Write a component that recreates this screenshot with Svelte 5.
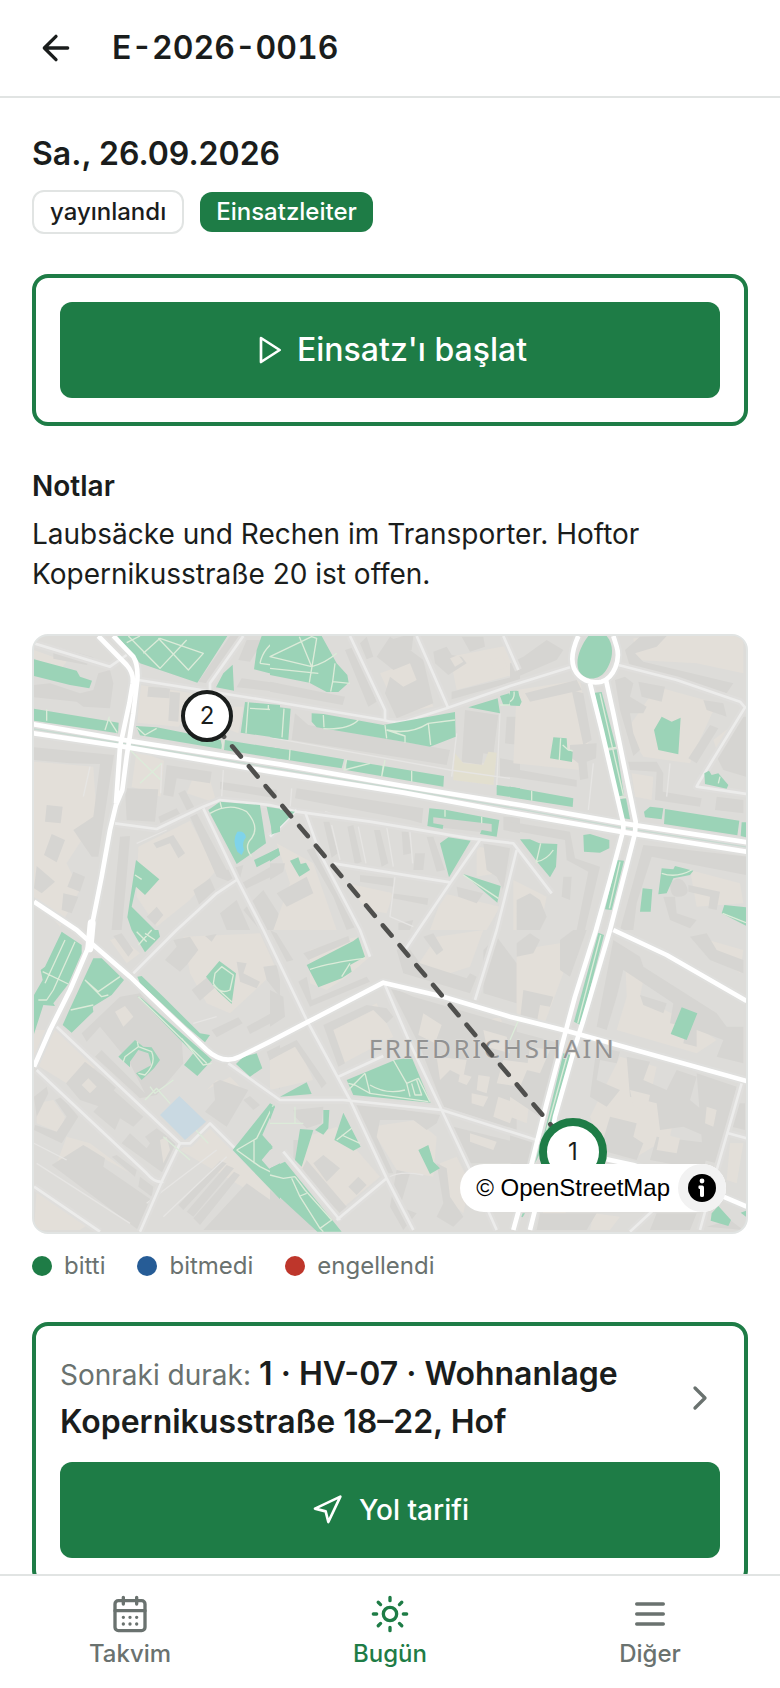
<script lang="ts">
  type MapTile = { x: number; y: number; yards: string; buildings: string; parks: string; paths: string };

  const stops = [
    { number: 2, left: 24.3, top: 13.4, active: false },
    { number: 1, left: 75.7, top: 86.5, active: true },
  ];

  const legend = [
    { label: 'bitti', tone: 'done' },
    { label: 'bitmedi', tone: 'open' },
    { label: 'engellendi', tone: 'blocked' },
  ];

  const tabs = [
    { label: 'Takvim', icon: 'calendar', active: false },
    { label: 'Bugün', icon: 'sun', active: true },
    { label: 'Diğer', icon: 'menu', active: false },
  ];

  const tiles: MapTile[] = [
    {
      x: 0,
      y: 0,
      yards: 'M330 165L520 195 445 290 322 278z M12 395L190 410 200 560 110 700 150 780 90 890 12 800z M320 360L402 392 392 500 305 470z M325 650L480 572 560 720 480 810 380 890 320 800z M470 490L560 520 540 450 490 440z M12 60L110 95 90 120 12 85z M610 230L640 230 625 310 600 300z',
      buildings: 'M12 165L60 160 150 190 190 180 205 130 240 120 250 160 240 235 160 230 140 215 12 202z M70 48L190 82 170 105 70 86z M355 170L420 175 418 205 352 200z M420 185L450 188 445 275 415 272z M12 352L252 375 240 450 205 680 185 680 152 632 130 600 190 560 210 402 120 400 12 390z M50 525L98 530 92 580 45 575z M65 612L105 630 80 697 42 675z M20 708L75 755 35 790 12 775z M130 725L165 740 150 785 112 770z M100 790L145 800 125 850 95 840z M285 475L385 478 375 575 290 570z M410 405L545 425 540 460 440 445 430 500 400 495z M570 455L740 480 740 505 570 478z M445 490L465 480 500 545 480 560z M480 560L500 550 590 720 640 705 625 765 560 740z M270 620L300 618 290 740 275 900 245 900 255 780z M370 640L430 615 465 670 445 685 420 640 380 655z M490 780L540 745 560 790 510 830z M350 860L380 830 400 855 375 885z M600 18L635 18 530 160 505 155z M635 145L745 160 745 185 620 172z M570 850L620 810 660 900 590 900z M640 840L700 780 745 850 745 900 690 900z M650 30L700 30 660 95 625 90z M385 560L440 535 455 560 395 590z M625 765L740 700 745 730 640 780z',
      parks: 'M12 88L140 122 150 140 186 152 178 175 120 165 12 138z M12 236L266 278 264 310 12 272z M262 18H592L502 158 330 100z M608 104L612 182 558 172 580 130z M318 288L380 292 572 330 578 358 330 316z M585 330L750 356V386L582 360z M645 216L750 225V325L632 308z M535 540L570 515 690 525 708 640 620 702z M710 530L750 536V605L728 612z M672 690L745 655 750 675 680 712z M318 690L388 748 345 795 318 770 305 830 375 900H305L292 862z M695 18H750V138L672 118 680 60z',
      paths: 'M295 18L390 115 470 30 M290 38L330 18 M340 70L390 25 520 70 475 120 385 25 M50 238V272 M238 260L225 300 M235 265L262 308 M320 292L345 315 380 295 M580 330L576 358 M655 216L648 310 M660 235L750 240 M715 225V240 M540 550Q600 515 650 545 Q690 590 665 625 Q640 650 665 680 M570 515L575 535 M690 100L750 108 M690 100Q700 50 750 25 M315 735L335 748 M300 360L392 450 M395 400L330 460',
    },
    {
      x: 720,
      y: 0,
      yards: 'M330 130L440 90 490 230 385 250z M540 80L720 45 745 130 560 180z M550 370L580 400 650 400 655 370 680 370 670 465 550 450z M620 650L700 660 680 730 620 740z M230 760L370 790 350 850 290 840z M520 790L690 830 650 900H480z M20 640L130 700 200 900H10L60 760z',
      buildings: 'M320 80L360 20 420 60 460 90 490 220 380 265 345 190 360 140 400 170 440 150 420 100 370 120z M360 30L400 18H430L425 60 385 68z M490 65L530 50 545 75 575 80 590 100 535 135 495 100z M545 185L750 135V150L545 208z M575 20H640L645 50 600 65z M225 60L255 50 320 215 295 230z M0 155L225 200 218 225 0 185z M75 250L115 285 540 360 530 405 65 330z M585 240L685 255 670 375 640 370 635 405 575 395z M80 475L460 535 455 580 420 570 75 505z M490 560L680 580 665 610 490 590z M160 575L178 575 203 670 185 683z M232 590L250 585 275 695 255 705z M312 600L330 600 355 700 335 710z M395 605L415 605 425 670 400 675z M470 620L490 620 525 720 500 725z M435 670L465 670 460 720 430 720z M270 735L370 745 372 770 270 755z M365 790L475 805 472 825 368 805z M20 790L110 740 130 790 50 830z M0 700L45 700 40 725 0 750z M640 640L720 655 700 780 680 740 650 720z M560 770L640 790 620 820 565 800z M710 260H750V345L705 340z M690 385L750 395V440H690z M110 660L140 650 260 890 230 900 190 800z M270 40L290 20 310 80 290 88z M385 880L430 870 420 900H385z M700 560H750V610L700 600z',
      parks: 'M0 18H155L200 100 232 135 236 158 205 186 170 186 118 158 0 135z M125 250L160 252 340 285 555 246 557 320 480 350 400 335 140 292 125 275z M0 228L62 236 55 330 0 322z M0 352L60 360 222 388 215 415 0 382z M230 390L522 438 520 470 228 420z M595 232L683 205 690 250z M690 198L745 182 750 228 700 225z M680 465L750 475V505L680 495z M478 535L530 540 688 570 680 620 630 612 635 600 665 605 665 582 490 562 490 580 520 585 518 597 472 588z M510 640L535 622 602 632 537 742z M580 732L692 768 682 818z M0 535L75 545 5 615z M0 668L25 655 30 675 0 695z M60 692L85 682 92 702 108 698 120 720 88 740z',
      paths: 'M88 20L125 110 0 80 125 20 140 25 118 158 M125 110Q165 100 200 70 M0 115L145 130 M195 100L188 155 240 160 M188 155L182 185 M160 255L162 292 M265 270Q235 300 160 296 M345 285L350 325 M350 300L405 318V338 M350 300Q420 315 475 280L555 270 M475 280L482 345 M60 358L58 390 M230 388L222 420 300 400 M340 405L335 440 M425 422V455 M42 236L36 322 M525 540V560 M635 560V580 M580 735L685 805 M690 225L720 225Q725 200 720 188 M345 390L335 440',
    },
    {
      x: 1440,
      y: 0,
      yards: 'M370 25L470 18H700V130L560 100 380 90z M20 180L210 150 240 320 210 420 10 400z M440 170L620 220 560 350 540 400 400 380 350 300z M610 330L700 260V420L640 420z M10 750L110 800 90 900H10z M540 720L690 760 700 820 560 830z M365 430L430 440 425 510 375 500z',
      buildings: 'M0 100L40 80 110 30 160 60 140 90 0 150z M345 60L390 20 470 18 440 50 375 70 400 95 670 160 650 190 360 110z M45 190L200 150 215 180 60 215z M185 180L220 190 245 330 220 345z M315 150L345 140 370 160 360 200 410 230 400 250 360 250 370 310 390 360 370 378 330 240z M385 155L465 170 455 215 395 200z M355 395L440 395 460 430 458 485 575 505 570 530 435 510 440 425 360 420z M180 345L260 340 258 385 230 395 235 445 210 450 205 400 180 380z M0 415L200 450 200 470 0 440z M580 210L640 220 650 260 590 240z M600 285L625 295 560 400 535 385z M620 500L700 510V550L615 540z M690 260L708 260V440L640 420 620 380z M0 575L180 605 195 685 270 710 225 900H200L235 725 170 690 165 630 0 600z M400 645L710 680 708 735 425 680 380 820 370 900H330z M535 765L630 785 620 840 595 835 600 800 535 785z M480 760Q510 730 528 765 T500 800Q480 800 480 760z M460 800L495 800 500 850 560 870 540 895 480 870z M20 810L60 790 90 810 110 860 90 900H20z M160 740L185 740 180 810 155 800z',
      parks: 'M235 18H290C318 50 305 100 285 125 265 152 225 152 208 125 193 95 210 50 235 18z M254 188L275 186 318 350 290 358z M293 362L320 358 342 495 325 500z M328 508L348 505 360 568 338 565z M130 322L170 325 172 358 188 366 186 396 120 385z M432 300L455 260 485 275 512 263 505 373 445 360z M0 183L22 182 35 215 30 226H0z M583 430L597 422 605 435 625 430 655 465 650 476 585 462z M0 470L190 505 188 531 0 502z M402 545L420 530 460 535 455 568 405 562z M465 537L688 572 682 616 462 582z M695 577H710V622L692 618z M30 628L60 628 88 640 142 642 138 710 120 742 85 700z M220 615L240 612 298 630 298 655 270 668 222 665z M320 690L342 692 305 840 285 838z M398 775L427 778 422 845 390 845z M455 715L490 718 495 708 550 722 540 735 490 745 470 790 445 793z M643 825L710 832V888L635 850z',
      paths: 'M270 190L340 495 M288 356L318 352 M328 500L348 503 M152 325L148 390 M158 345L175 360 188 362 M65 482V512 M455 730Q500 745 545 720 M92 640L78 700 M80 695Q110 690 130 660 M330 695L298 835 M638 850L708 878 M625 460L630 440 M0 215Q15 205 12 185',
    },
    {
      x: 0,
      y: 900,
      yards: 'M460 20L690 10 740 120 600 250 530 220 480 130z M240 30L270 20 330 70 290 100z M20 520L70 510 105 560 90 610 20 580z M110 620L180 640 300 730 230 690 170 650 80 700z M450 660L540 590 750 790 720 820z M530 480L600 440 640 480 560 450z M12 300L80 300 200 410 110 460 12 400z M20 780L180 880 150 900H12z',
      buildings: 'M405 90L440 50 430 30 480 20 505 60 470 105 450 125z M485 180L540 135 570 160 510 212z M525 18L560 12 545 35z M620 95L650 100 640 130 690 155 680 175 630 155z M545 300L625 262 638 280 560 322z M650 290L750 235V265L660 312z M155 310L270 200 330 190 455 325 460 400 380 495 330 505 195 380 215 360 345 490 300 400 210 290 170 335z M215 290L270 240 310 270 350 300 330 330 270 340z M108 460L165 395 260 470 210 530 150 510z M190 545L250 480 340 560 310 590 270 565 255 600z M275 640L300 610 350 655 360 640 345 620 380 595 440 640 400 730z M65 705L160 645 225 685 220 710 365 810 325 900z M245 680L260 675 320 720 315 740z M330 740L370 770 365 800 325 770z M12 500L50 470 55 490 20 560z M75 510L95 500 145 560 95 640 12 600 15 585 80 605 110 560z M525 545L555 510 550 460 570 450 655 480 590 590z M640 510L660 498 690 525 670 540z M570 693L590 700 460 840 445 825z M590 705L612 715 490 860 470 845z M612 725L630 735 510 885 490 865z M520 900L650 760 750 830V900z M250 18L275 10 310 60 295 80z M700 110L740 105 750 150V200L710 150z M710 365L750 345V480z',
      parks: 'M95 5L155 45 155 70 115 162 70 220 75 228 40 225 12 312V195L38 150 32 120 45 110z M190 85L215 85 282 150 245 195 188 230 190 245 125 308 98 285 118 240z M305 0H385L390 20 345 67z M322 140L335 138 400 200 510 310 540 315 525 337 470 290 330 160z M322 198L335 205 530 375 546 390 502 438 462 405 490 370z M265 380L315 330 340 350 365 352 390 390 372 415 335 450 318 430 365 405 355 370 325 360 300 395 300 412z M568 93L618 130 605 222 565 185 528 140z M618 402L640 380 680 370 697 415 660 440z M720 520L735 528 697 615 728 650 695 690 718 716 750 700V808L608 660 648 610z',
      paths: 'M105 30L45 160 M135 35L70 180 50 210H25 M38 125L115 162 M165 150L205 185 270 140 M165 150L215 200 235 195 M122 240L190 225 M320 5L350 35 M325 45L365 0 M345 10L375 30 M325 200L530 400 M455 325L520 405 545 400 M322 335L325 350 285 380 280 395 M325 350L365 365Q380 400 345 435L325 430 M555 130L575 110 610 135 600 180Q570 195 550 160z M550 165L605 215 M620 660L680 625 730 525 M620 660L690 710 750 740 M672 630V700 M345 510L380 475 420 520 M360 470L375 490 430 450 M400 620L480 690 M460 560L535 640',
    },
    {
      x: 720,
      y: 900,
      yards: 'M120 60L260 20 300 80 230 140 170 180 120 160z M500 20L640 0 600 110 540 130 440 110z M175 290L320 220 370 320 220 400z M0 390L80 340 130 450 0 480z M300 590L440 570 500 620 490 740 380 720z M110 620L200 590 330 740 200 850 90 720z M510 700L560 680 600 760 580 850 520 800z M620 280L690 260 720 330 640 350z',
      buildings: 'M100 70L235 18 240 35 115 90z M380 60L410 45 450 100 590 145 600 130 620 140 600 190 400 130z M85 155L110 140 125 210 290 140 300 155 120 230z M0 0L20 10 70 90 50 95z M460 20L490 10 520 60 500 75z M160 285L290 225 350 235 370 260 350 280 310 240 190 300 225 400 205 410z M0 370L80 330 170 460 155 475 75 350 0 390z M70 540L160 530 155 580 110 595 75 560z M255 520L510 555 500 580 470 600 430 570 330 570 320 620 370 730 340 730z M360 170L430 200 740 290V600L520 530 450 350z M130 700L160 675 210 715 170 755z M235 770L265 740 290 765 260 795z M380 720L420 730 390 830 440 850 400 900 360 830z M500 700L530 715 540 800 580 860 550 890 500 860 520 820z M0 780L150 900H0z M70 630L100 630V690H70z M640 60L680 20 740 100V220L640 190z M550 590L750 640V700H600z M90 730L110 690 230 830 210 850z M0 180L40 200 45 260 0 290z',
      parks: 'M250 33L265 22 285 80 240 105 245 125 215 145 145 172 110 105z M230 450L375 390 425 382 482 518 250 495z M30 500L110 457 125 492z M0 530L15 530 0 570z M160 540L178 540 175 595 160 614 135 600 160 580z M90 597L130 600 95 710 75 690z M220 548L272 650 250 662 193 630z M445 660L475 645 490 695 510 715 480 732z M0 715L45 695 215 905H142L0 775z M0 640L8 655 0 660z',
      paths: 'M120 118Q180 98 285 85 M240 100L215 140 M370 390L410 460 445 445 480 515 M410 460L420 500 M285 430L300 490 M300 465Q350 495 405 480 M235 460L255 465 300 490 475 515 M235 480L285 430 M425 460L435 495 455 495 440 450 M0 735L40 745 75 740 M65 745L90 800 150 895 185 870 105 780 75 740 M90 798L110 790 M150 895L160 905 M200 630L245 595 M215 615L270 640 M0 580H100 M75 530V580',
    },
    {
      x: 1440,
      y: 900,
      yards: 'M345 60L400 150 390 200 560 290 620 330 560 370 320 300 350 200z M330 380L440 410 420 500 500 520 480 620 380 680 270 640 240 560z M20 60L150 40 160 130 100 290 20 250z M560 20L700 60 690 130 600 60z M0 470L60 500 50 580 0 560z M660 640L700 640 680 760 650 750z M100 840L170 840 150 900H90z M250 850L330 860 300 900H240z',
      buildings: 'M20 40L60 10 90 30 70 70 20 80z M150 30L190 0H230L180 140 150 120z M40 180L130 200 120 230 90 225 80 280 30 270z M310 30L390 80 400 110 620 250 650 290 700 290V400L620 380 640 330 560 300 560 350 520 340 530 290 480 280 490 220 400 160 340 120 320 200 290 300 260 290z M390 195L470 220 460 250 400 225z M260 350L330 365 320 400 270 390 260 450 330 480 290 530 240 500z M350 380L420 395 400 450 470 480 500 420 560 440 540 510 600 560 590 620 520 590 450 600 440 520 360 500z M300 560L380 580 370 620 400 640 380 690 270 660z M440 620L600 640 580 720 420 690z M560 430L680 470 620 700 580 690z M540 20L590 10 620 60 700 90V130L600 90z M660 520L705 520V600L665 590z M0 600L80 640 50 720 0 700z M90 850H260L230 900H80z M440 850L560 850 540 900H420z M590 890L660 870 700 900z M0 300L150 340 90 560 0 500z',
      parks: 'M265 8L282 15 212 286 192 275z M160 370L183 375 120 610 75 700 90 640 105 600z M515 232L562 250 530 330 482 312z M605 850L625 828 663 870 655 888 602 872z M38 850L45 850 38 862 34 860z M692 848L708 842V860z',
      paths: 'M272 15L203 280 M172 375L110 600 M30 260L0 330',
    },
  ];

  // open ground inside the larger blocks
  const courtyards = 'M255 1145L285 1128 310 1160 280 1190z M155 1365L175 1345 200 1370 180 1390z M1180 1150L1235 1185 1215 1240 1165 1215z M1220 1280L1310 1290 1300 1340 1260 1320 1230 1350z M1360 1200L1430 1220 1440 1270 1370 1250z M1290 1330L1325 1340 1310 1365 1285 1355z M1345 1335L1380 1340 1370 1390 1340 1380z M1325 1390L1375 1400 1360 1430 1325 1420z M1420 1290L1500 1300 1470 1370 1400 1360z M1405 1400L1460 1420 1440 1480 1390 1460z M1320 1510L1400 1535 1390 1560 1320 1535z M1500 1250L1560 1260 1530 1330 1490 1320z M1800 1380L1860 1395 1850 1440 1810 1430z M1890 1510L1950 1525 1940 1570 1880 1560z M2030 1430L2060 1440 2050 1490 2025 1480z M390 1530L410 1520 420 1560 400 1600z M1380 90L1420 80 1430 110 1395 125z M1260 85L1285 75 1300 95 1275 110z';

  const streets = [
    'M12 40L240 110 290 75 M325 150L500 178 720 213 1060 270Q1090 280 1130 273L1250 235 1440 168 1620 112',
    'M1765 105L1940 150 2130 215 2145 232 2005 460 2000 470 2150 492',
    'M640 18L540 160V190 M255 580L380 597 520 530 570 510 720 525 800 545 1020 575 1320 625 1450 640 1565 790 M800 540L720 620',
    'M960 18L1065 240V270 M1160 18L1255 235 M1420 18L1465 120 M825 545L870 670 990 900 1020 980',
    'M910 700L1260 757 M1350 630L1260 760 1165 900 1125 960 M1460 660L1400 900 1335 1110',
    'M520 535L620 745 700 900 830 1170 960 1410 1070 1645 1150 1800 M620 750L560 790 440 900 310 1030',
    'M80 1190L450 1540 395 1655 330 1805 M20 1320L350 1630Q375 1660 400 1655 M12 1670L210 1805 M450 1540H480L540 1480 760 1700',
    'M595 1300L750 1410H940L1235 1440 1520 1530 M1065 1065L1140 1240 1235 1440 1320 1620 1400 1800',
    'M925 1340L1060 1278 M1070 1645L920 1770 M2135 1360L2060 1620 2010 1800 M2095 1510L2150 1525 M1870 1740L1800 1805 M760 1565L930 1770',
  ];

  const lanes = 'M395 400L392 490 M580 420L575 500 M785 475L780 540 M885 545L1000 580 M905 585L930 690 M985 590L1008 700 M1070 590L1090 710 M1140 605L1148 700 M720 322L1260 420 1440 445 M1280 310L1265 440 M1410 250L1400 470 M1690 400L1675 540 M1920 400L1910 500 M320 640L410 600 M180 410L160 500 M1095 740L1080 860 1150 890 M490 1180L560 1160 M350 1720L560 1560 M400 1760L590 1580 M12 1540L110 1590 M20 1600L300 1780 M1070 1645Q1110 1620 1180 1635';

  const avenues = [
    'M0 281L300 333 750 403 1120 468 1470 525 1780 580 2150 637',
    'M0 308L280 350 720 425 1120 488 1440 547 1770 605 2150 665',
    'M205 18L290 105Q312 130 308 160L298 220 270 350 258 520 M250 18L310 80Q325 105 322 150L310 250 290 380 277 480 258 525 240 600 215 740 185 890 180 940 120 1080 60 1200 12 1310',
    'M12 815L140 900 190 945 300 1040 430 1165 530 1260Q580 1305 630 1280L720 1235 835 1175 1060 1058 1240 1100 1440 1160 1620 1205 2150 1353',
    'M1645 18C1626 60 1622 90 1632 115 1648 150 1682 162 1715 155 1752 142 1772 90 1760 50L1750 18',
    'M1680 160L1715 300 1780 580V600L1740 750 1698 900 1635 1100 1600 1230 1550 1420 1505 1600 1450 1800',
    'M1728 150L1750 250 1817 575 1815 610 1740 900 1660 1170 1635 1250 1575 1460 1550 1600 1500 1800',
    'M1750 900L1910 975 2150 1113 M1730 1588L1810 1605 2080 1700 2150 1730',
  ];
</script>

{#snippet icon(name: string)}
  <svg class="icon" viewBox="0 0 24 24" aria-hidden="true">
    {#if name === 'back'}
      <path d="m12 19-7-7 7-7M19 12H5" />
    {:else if name === 'play'}
      <path d="M6 3l14 9-14 9z" />
    {:else if name === 'navigation'}
      <path d="M3 11l19-9-9 19-2-8z" />
    {:else if name === 'chevron'}
      <path d="m9 18 6-6-6-6" />
    {:else if name === 'calendar'}
      <rect x="3" y="4" width="18" height="18" rx="2" />
      <path d="M8 2v4M16 2v4M3 10h18M8 14h.01M12 14h.01M16 14h.01M8 18h.01M12 18h.01M16 18h.01" />
    {:else if name === 'sun'}
      <circle cx="12" cy="12" r="4" />
      <path d="M12 2v2M12 20v2M4.93 4.93l1.41 1.41M17.66 17.66l1.41 1.41M2 12h2M20 12h2M6.34 17.66l-1.41 1.41M19.07 4.93l-1.41 1.41" />
    {:else if name === 'menu'}
      <path d="M4 6h16M4 12h16M4 18h16" />
    {/if}
  </svg>
{/snippet}

<div class="app">
  <header>
    <button class="back" aria-label="Geri">{@render icon('back')}</button>
    <h1>E-2026-0016</h1>
  </header>

  <main>
    <section class="summary">
      <h2>Sa., 26.09.2026</h2>
      <div class="chips">
        <span class="chip outline">yayınlandı</span>
        <span class="chip">Einsatzleiter</span>
      </div>
    </section>

    <section class="card">
      <button class="primary large">{@render icon('play')}Einsatz'ı başlat</button>
    </section>

    <section class="notes">
      <h3>Notlar</h3>
      <p>Laubsäcke und Rechen im Transporter. Hoftor Kopernikusstraße 20 ist offen.</p>
    </section>

    <section class="route">
      <div class="map">
        <svg class="canvas" viewBox="12 18 2136 1788" preserveAspectRatio="xMidYMid slice" role="img" aria-label="Friedrichshain">
          {#each tiles as tile}
            <g transform="translate({tile.x} {tile.y})">
              <path class="yard" d={tile.yards} />
              <path class="building" d={tile.buildings} />
            </g>
          {/each}
          <path class="yard" d={courtyards} />
          <path class="sand" d="M1275 370L1300 400 1360 405 1375 365 1400 368 1390 465 1270 450z" />
          <path class="lane" d={lanes} />
          {#each streets as street}<path class="street-edge" d={street} />{/each}
          {#each avenues as avenue}<path class="avenue-edge" d={avenue} />{/each}
          {#each streets as street}<path class="street" d={street} />{/each}
          {#each tiles as tile}
            <g transform="translate({tile.x} {tile.y})">
              <path class="park" d={tile.parks} />
              <path class="path" d={tile.paths} />
            </g>
          {/each}
          <path class="pond" d="M622 605Q645 602 648 622 634 638 642 660L635 675 622 665Q605 630 622 605z" />
          <path class="plaza" d="M448 1398L528 1475 465 1530 390 1455z" />
          <path class="median" d="M0 295L290 342 730 414 1120 478 1460 536 1775 593 2150 651" />
          {#each avenues as avenue}<path class="avenue" d={avenue} />{/each}
          <path class="avenue wide" d="M185 880L178 955" />
          <text x="1016" y="1283">FRIEDRICHSHAIN</text>
          <path class="leg" d="M530 258L1630 1565" />
        </svg>

        {#each stops as stop}
          <button class="stop" class:active={stop.active} style="left: {stop.left}%; top: {stop.top}%">{stop.number}</button>
        {/each}

        <div class="attribution">
          <a href="https://www.openstreetmap.org/copyright">© OpenStreetMap</a>
          <button aria-label="Harita bilgisi">
            <svg viewBox="0 0 24 24" aria-hidden="true">
              <circle cx="12" cy="12" r="7" />
              <circle class="cut" cx="12" cy="8.5" r="1.2" />
              <path class="cut" d="M10.5 10.8h1.6q.9 0 .9.9v4q0 .8-1 .8t-1-.8v-3.2q-.8 0-.8-.8t.3-.9z" />
            </svg>
          </button>
        </div>
      </div>

      <ul class="legend">
        {#each legend as item}<li class={item.tone}>{item.label}</li>{/each}
      </ul>
    </section>

    <section class="card next">
      <a class="next-stop" href="#durak">
        <strong><span>Sonraki durak:</span> 1 · HV-07 · Wohnanlage Kopernikusstraße 18–22, Hof</strong>
        {@render icon('chevron')}
      </a>
      <button class="primary">{@render icon('navigation')}Yol tarifi</button>
    </section>
  </main>

  <nav>
    {#each tabs as tab}
      <a href="#{tab.icon}" class:active={tab.active} aria-current={tab.active ? 'page' : undefined}>
        {@render icon(tab.icon)}
        {tab.label}
      </a>
    {/each}
  </nav>
</div>

<style>
  .app {
    --green: #1e7c46;
    --ink: #1a1d1c;
    --muted: #6a726f;
    --line: #e1e4e3;
    display: flex;
    flex-direction: column;
    height: 100dvh;
    background: #fff;
    color: var(--ink);
    font-family: Inter, "Noto Sans", sans-serif;
    font-size: 28px;
    line-height: 40px;
  }
  h1, h2, h3, p, ul { margin: 0; padding: 0; }
  button { padding: 0; border: 0; color: inherit; font: inherit; cursor: pointer; }
  a { color: inherit; text-decoration: none; }
  .icon { flex: none; width: 40px; height: 40px; fill: none; stroke: currentColor; stroke-width: 2; stroke-linecap: round; stroke-linejoin: round; }

  header { display: flex; flex: none; align-items: center; gap: 12px; height: 96px; padding: 0 12px; border-bottom: 2px solid var(--line); }
  .back { display: grid; place-items: center; width: 88px; height: 88px; background: none; }
  h1 { font-size: 32px; font-weight: 600; line-height: 48px; font-variant-numeric: tabular-nums; }

  main { display: flex; flex: 1; flex-direction: column; gap: 40px; min-height: 0; padding: 32px; overflow-y: auto; scrollbar-width: none; }
  main > section { flex: none; }

  .summary { display: flex; flex-direction: column; gap: 12px; }
  h2 { font-size: 32px; font-weight: 600; line-height: 48px; }
  .chips { display: flex; align-items: center; gap: 16px; }
  .chip { padding: 4px 16px; border-radius: 12px; background: var(--green); color: #fff; font-size: 24px; font-weight: 500; line-height: 32px; }
  .chip.outline { border: 2px solid var(--line); background: #fff; color: var(--ink); }

  .card { padding: 24px; border: 4px solid var(--green); border-radius: 16px; }
  .primary { display: flex; align-items: center; justify-content: center; gap: 16px; width: 100%; height: 96px; border-radius: 12px; background: var(--green); color: #fff; font-weight: 500; }
  .primary.large { gap: 12px; font-size: 32px; }
  .primary .icon { width: 32px; height: 32px; }

  .notes { display: flex; flex-direction: column; gap: 8px; }
  h3 { font-size: 28px; font-weight: 600; line-height: 40px; }

  .route { display: flex; flex-direction: column; gap: 16px; }
  .map { position: relative; box-sizing: border-box; height: 600px; overflow: hidden; border: 2px solid var(--line); border-radius: 16px; background: #dddcd9; }
  .canvas { display: block; width: 100%; height: 100%; fill: none; stroke-linejoin: round; }
  .yard { fill: #e3dfd9; }
  .building { fill: #d6d5d2; }
  .sand { fill: #e2dfcf; }
  .lane { stroke: #e6e5e3; stroke-width: 4; }
  .street-edge { stroke: #dfdedc; stroke-width: 22; }
  .street { stroke: #ececeb; stroke-width: 8; }
  .park { fill: #9bd3b7; }
  .path { stroke: #dcebd9; stroke-width: 4; }
  .pond { fill: #7fd3ea; }
  .plaza { fill: #c9d9e2; }
  .avenue-edge { stroke: #dfdfdd; stroke-width: 26; }
  .avenue { stroke: #fff; stroke-width: 14; }
  .avenue.wide { stroke-width: 24; stroke-linecap: round; }
  .median { stroke: #c8dad1; stroke-width: 4; }
  .leg { stroke: #4f4f4d; stroke-width: 14; stroke-linecap: round; stroke-dasharray: 40 38; stroke-dashoffset: 37; }
  .canvas text { fill: #929292; stroke: #dddcd9; stroke-width: 4; paint-order: stroke; font-family: "Noto Sans", sans-serif; font-size: 78px; letter-spacing: 0.1em; }

  .stop { position: absolute; box-sizing: border-box; width: 52px; height: 52px; border: 4px solid var(--ink); border-radius: 50%; background: #fff; color: var(--ink); font-size: 24px; line-height: 32px; transform: translate(-50%, -50%); }
  .stop.active { width: 68px; height: 68px; border: 8px solid var(--green); }

  .attribution { position: absolute; right: 20px; bottom: 20px; display: flex; align-items: center; gap: 8px; padding-left: 16px; border-radius: 24px; background: #fff; color: #000; font: 24px/48px "Liberation Sans", Arial, sans-serif; }
  .attribution button { width: 48px; height: 48px; border-radius: 50%; background: #f2f2f2; }
  .attribution svg { display: block; width: 48px; height: 48px; }
  .attribution .cut { fill: #fff; }

  .legend { display: flex; gap: 32px; color: var(--muted); font-size: 24px; line-height: 32px; list-style: none; }
  .legend li { display: flex; align-items: center; gap: 12px; }
  .legend li::before { content: ""; width: 20px; height: 20px; border-radius: 50%; background: var(--green); }
  .legend .open::before { background: #265c96; }
  .legend .blocked::before { background: #be362b; }

  .next { display: flex; flex-direction: column; gap: 16px; }
  .next-stop { display: flex; align-items: center; justify-content: space-between; gap: 16px; }
  .next-stop strong { font-size: 32px; font-weight: 600; line-height: 48px; }
  .next-stop span { color: var(--muted); font-size: 28px; font-weight: 400; line-height: 40px; }
  .next-stop .icon { color: var(--muted); }

  nav { display: flex; flex: none; height: 112px; border-top: 2px solid var(--line); background: #fff; color: var(--muted); }
  nav a { display: flex; flex: 1; flex-direction: column; align-items: center; justify-content: center; gap: 4px; font-size: 24px; font-weight: 500; line-height: 32px; }
  nav a.active { color: var(--green); }
</style>
